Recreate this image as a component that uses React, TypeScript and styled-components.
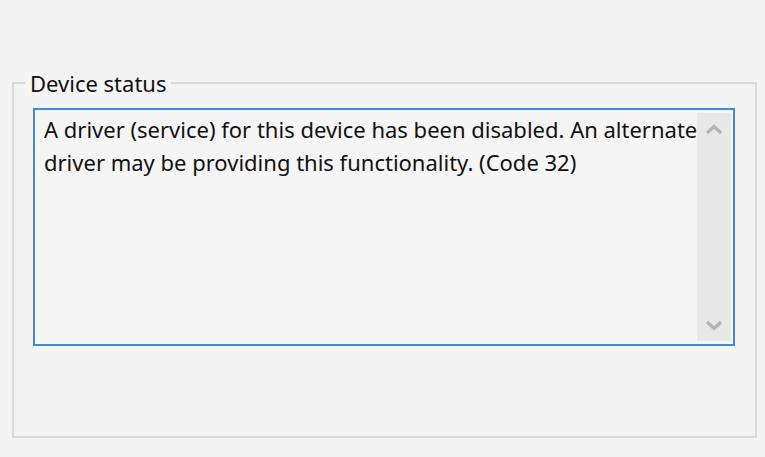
import styled, { createGlobalStyle } from 'styled-components';

const GlobalStyle = createGlobalStyle`
  html, body {
    margin: 0;
    padding: 0;
    background: #f4f4f4;
  }
  body {
    font-family: "Noto Sans", "Open Sans", sans-serif;
    color: #111;
  }
`;

const Page = styled.div`
  width: 765px;
  height: 457px;
  box-sizing: border-box;
  padding: 71px 8px 19px 12px;
  background: #f4f4f4;
`;

const Group = styled.fieldset`
  margin: 0;
  height: 100%;
  box-sizing: border-box;
  border: 2px solid #dadada;
  padding: 13px 20px 0 19px;
  min-width: 0;
`;

const Legend = styled.legend`
  font-size: 22px;
  padding: 0 5px;
  margin-left: -8px;
  line-height: 24px;
  color: #111;
`;

const TextBox = styled.div`
  height: 238px;
  box-sizing: border-box;
  border: 2px solid #4288d8;
  background: #f5f5f5;
  display: flex;
  padding: 3px 2px 3px 9px;
`;

const Message = styled.p`
  flex: 1;
  margin: 0;
  font-size: 22px;
  line-height: 33px;
  color: #111;
  white-space: nowrap;
  overflow: hidden;
`;

const ScrollTrack = styled.div`
  width: 34px;
  background: #e8e8e8;
  display: flex;
  flex-direction: column;
  justify-content: space-between;
  align-items: center;
  padding: 11px 0 10px;
`;

const Arrow = ({ dir }: { dir: 'up' | 'down' }) => (
  <svg width="18" height="11" viewBox="0 0 18 11">
    <path
      d={dir === 'up' ? 'M2 9 L9 2.5 L16 9' : 'M2 2 L9 8.5 L16 2'}
      fill="none"
      stroke="#b3b3b3"
      strokeWidth="3.2"
    />
  </svg>
);

export default function App() {
  return (
    <Page>
      <GlobalStyle />
      <Group>
        <Legend>Device status</Legend>
        <TextBox>
          <Message>
            A driver (service) for this device has been disabled. An alternate
            <br />
            driver may be providing this functionality. (Code 32)
          </Message>
          <ScrollTrack>
            <Arrow dir="up" />
            <Arrow dir="down" />
          </ScrollTrack>
        </TextBox>
      </Group>
    </Page>
  );
}
